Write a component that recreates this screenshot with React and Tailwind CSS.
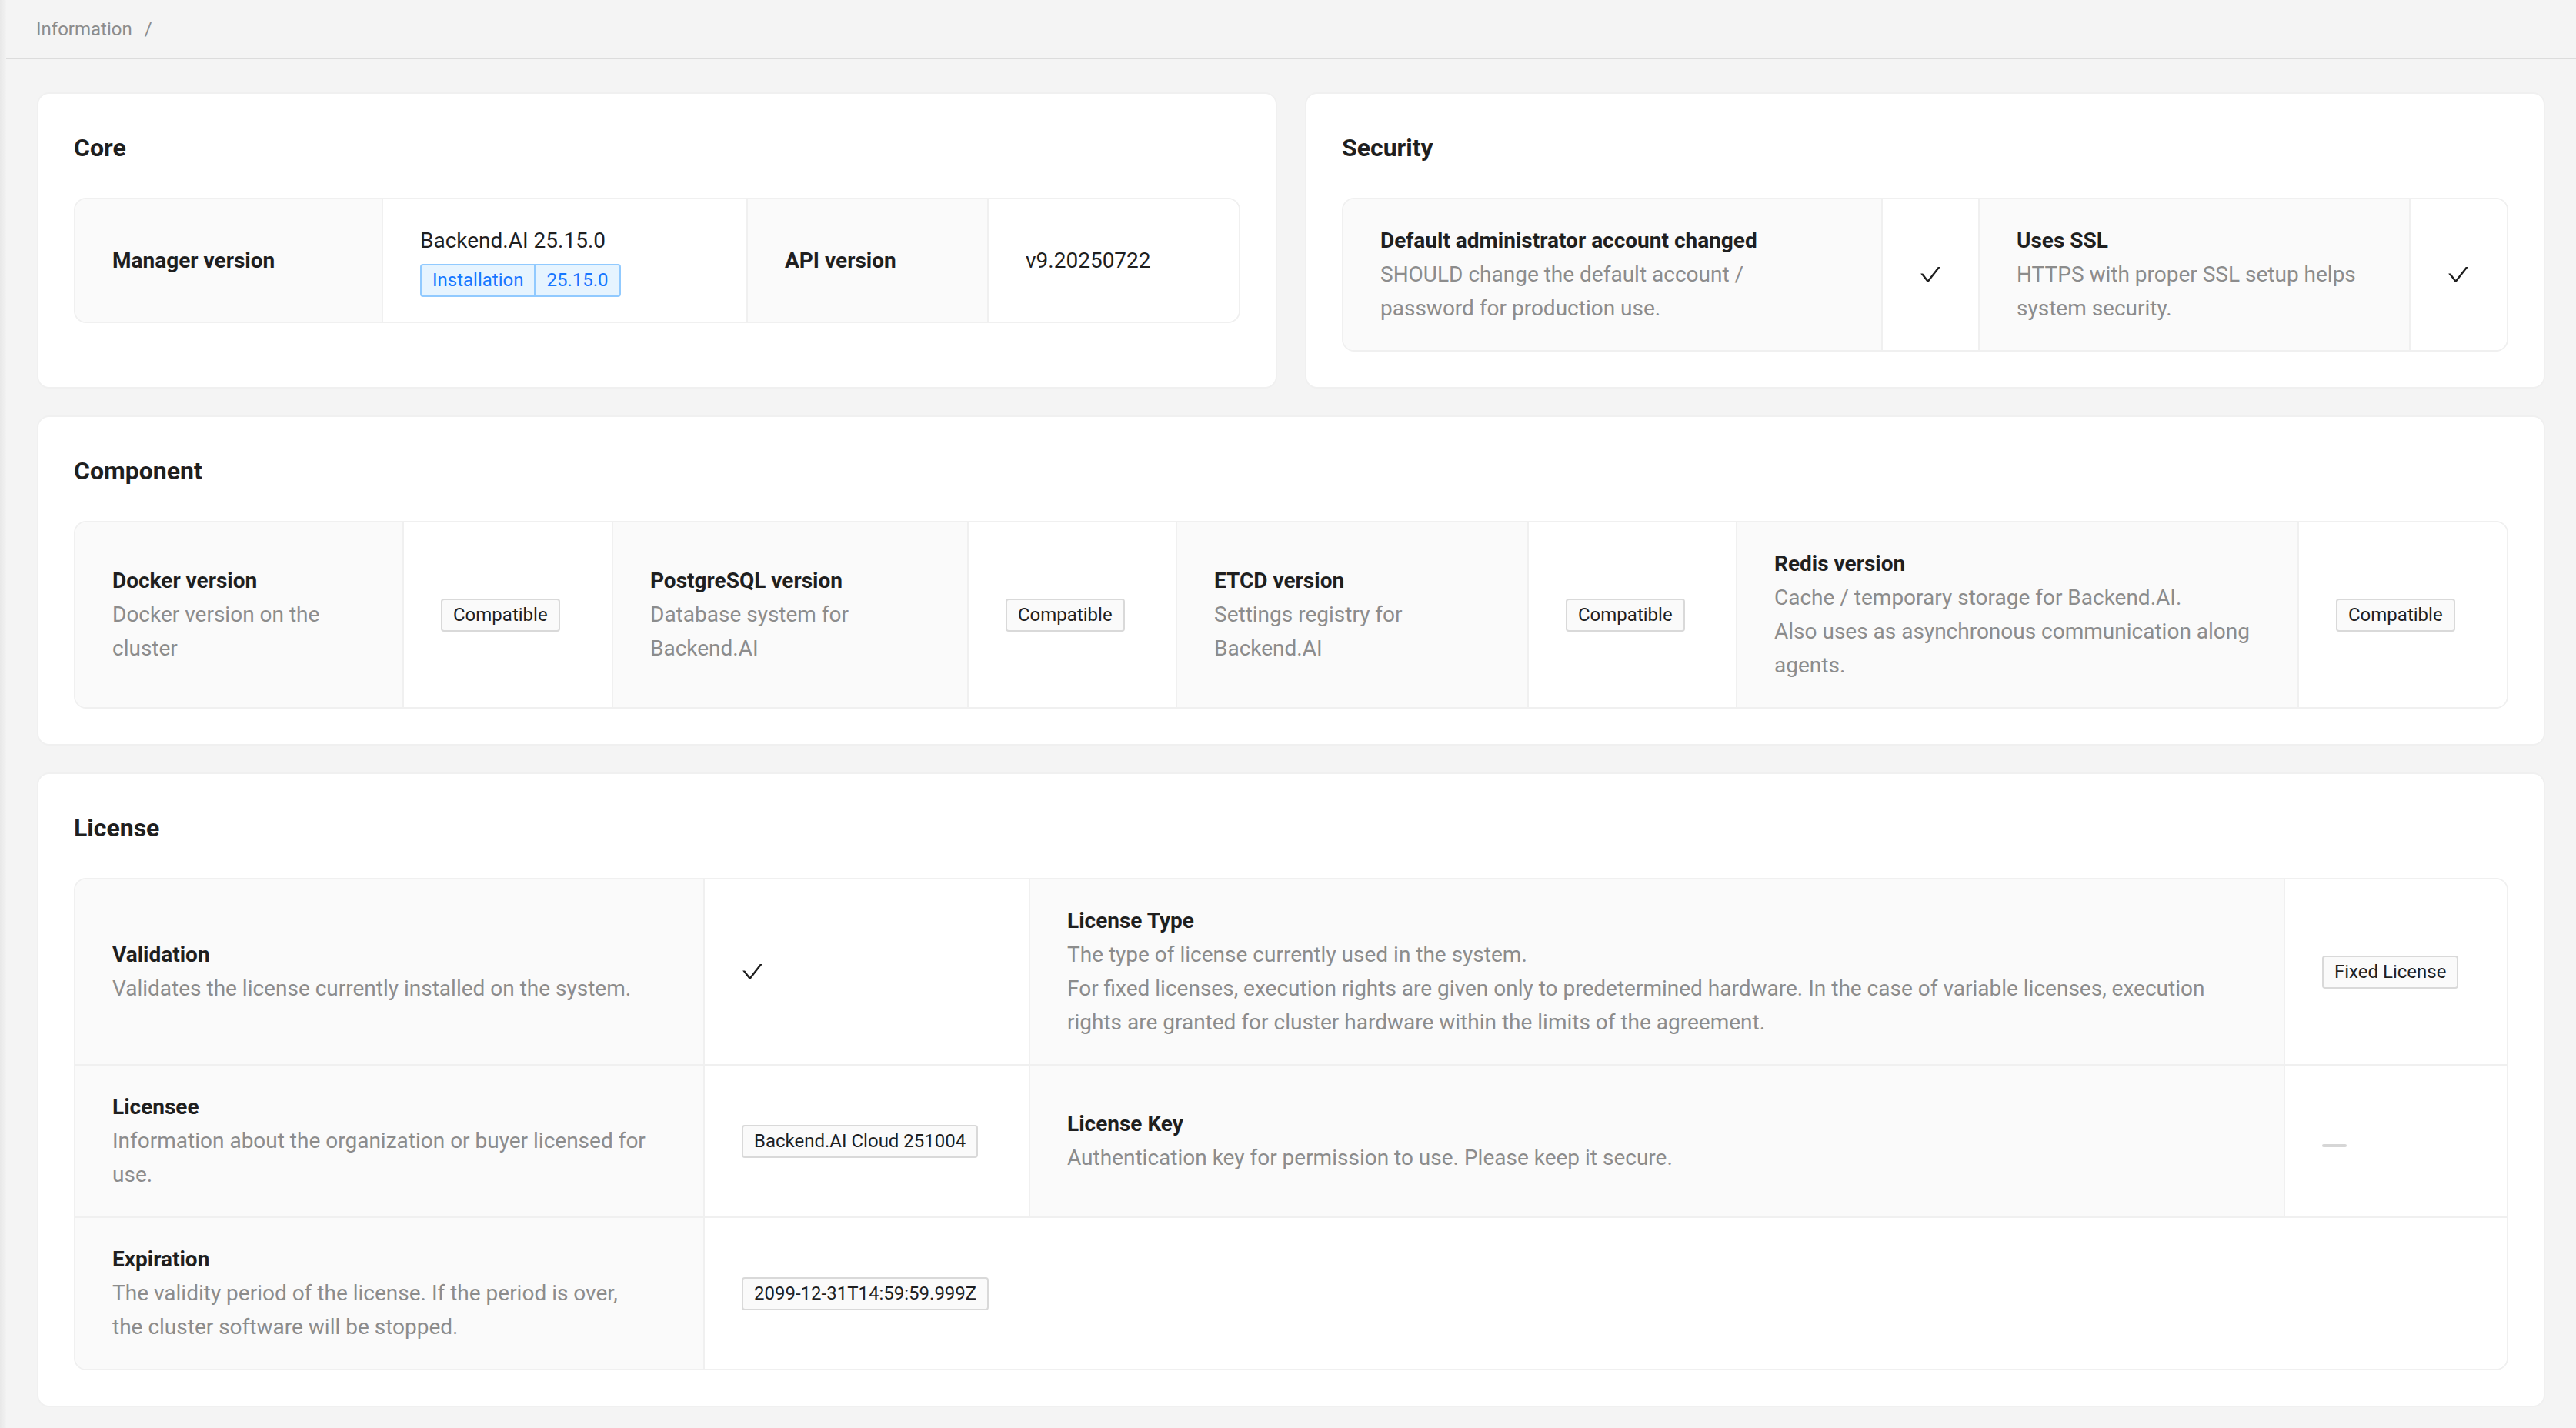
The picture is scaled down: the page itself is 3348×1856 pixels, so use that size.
import React from "react";

const CheckIcon = () => (
  <svg viewBox="64 64 896 896" className="h-[28px] w-[28px] text-[#1f1f1f]" fill="currentColor">
    <path d="M912 190h-69.9c-9.8 0-19.1 4.5-25.1 12.2L404.7 724.5 207 474a32 32 0 00-25.1-12.2H112c-6.7 0-10.4 7.7-6.3 12.9l273.9 347c12.8 16.2 37.4 16.2 50.3 0l488.4-618.9c4.1-5.1.4-12.8-6.3-12.8z" />
  </svg>
);

const Tag = ({ children }) => (
  <span className="inline-flex h-[43px] items-center rounded-[4px] border-2 border-[#d9d9d9] bg-[#fafafa] px-[14px] text-[24px] leading-[39px] text-[#1f1f1f] whitespace-nowrap">
    {children}
  </span>
);

// label cell: bold title + grey description lines
const Label = ({ title, lines = [], className = "" }) => (
  <div className={`flex flex-col justify-center bg-[#fafafa] px-12 py-8 border-[#f0f0f0] ${className}`}>
    <div className="font-bold text-[#1f1f1f]">{title}</div>
    {lines.map((l, i) => (
      <div key={i} className="whitespace-nowrap text-[#8c8c8c]">
        {l}
      </div>
    ))}
  </div>
);

const Value = ({ children, className = "" }) => (
  <div className={`flex flex-col items-start justify-center bg-white px-12 py-8 border-[#f0f0f0] ${className}`}>
    {children}
  </div>
);

const Card = ({ title, children }) => (
  <div className="rounded-[16px] border-2 border-[#f0f0f0] bg-white p-[46px]">
    <h2 className="mb-[41px] text-[32px] font-bold leading-[48px] text-[#1f1f1f]">{title}</h2>
    {children}
  </div>
);

const App = () => {
  return (
    <div className="flex min-h-screen bg-[#f4f4f4] font-['Roboto',sans-serif] text-[28px] leading-[44px] text-[#1f1f1f]">
      <div className="w-2 shrink-0 bg-linear-to-r from-[#e8e8e8] to-[#f2f2f2]" />

      <div className="flex-1">
        {/* Breadcrumb header */}
        <div className="flex h-[77px] items-center border-b-2 border-[#dcdcdc] pl-[39px] text-[24px] text-[#8c8c8c]">
          <span>Information</span>
          <span className="ml-[16px]">/</span>
        </div>

        <div className="flex flex-col gap-[35px] px-10 pt-[43px] pb-7">
          <div className="grid grid-cols-2 gap-[36px]">
            {/* Core */}
            <Card title="Core">
              <div className="grid grid-cols-[400px_474px_313px_1fr] overflow-hidden rounded-[16px] border-2 border-[#f0f0f0]">
                <Label title="Manager version" className="border-r-2" />
                <Value className="border-r-2">
                  <div>Backend.AI 25.15.0</div>
                  <div className="mt-2 flex h-[43px] rounded-[4px] border-2 border-[#91caff] bg-[#e6f4ff] text-[24px] leading-[39px] text-[#1677ff]">
                    <span className="border-r-2 border-[#91caff] px-[14px]">Installation</span>
                    <span className="px-[14px]">25.15.0</span>
                  </div>
                </Value>
                <Label title="API version" className="border-r-2" />
                <Value>
                  <div>v9.20250722</div>
                </Value>
              </div>
            </Card>

            {/* Security */}
            <Card title="Security">
              <div className="grid grid-cols-[701px_126px_560px_1fr] overflow-hidden rounded-[16px] border-2 border-[#f0f0f0]">
                <Label
                  title="Default administrator account changed"
                  lines={["SHOULD change the default account /", "password for production use."]}
                  className="border-r-2"
                />
                <Value className="border-r-2">
                  <CheckIcon />
                </Value>
                <Label
                  title="Uses SSL"
                  lines={["HTTPS with proper SSL setup helps", "system security."]}
                  className="border-r-2"
                />
                <Value>
                  <CheckIcon />
                </Value>
              </div>
            </Card>
          </div>

          {/* Component */}
          <Card title="Component">
            <div className="grid grid-cols-[427px_272px_462px_271px_457px_271px_730px_1fr] overflow-hidden rounded-[16px] border-2 border-[#f0f0f0]">
              <Label title="Docker version" lines={["Docker version on the", "cluster"]} className="border-r-2" />
              <Value className="border-r-2">
                <Tag>Compatible</Tag>
              </Value>
              <Label title="PostgreSQL version" lines={["Database system for", "Backend.AI"]} className="border-r-2" />
              <Value className="border-r-2">
                <Tag>Compatible</Tag>
              </Value>
              <Label title="ETCD version" lines={["Settings registry for", "Backend.AI"]} className="border-r-2" />
              <Value className="border-r-2">
                <Tag>Compatible</Tag>
              </Value>
              <Label
                title="Redis version"
                lines={[
                  "Cache / temporary storage for Backend.AI.",
                  "Also uses as asynchronous communication along",
                  "agents.",
                ]}
                className="border-r-2"
              />
              <Value>
                <Tag>Compatible</Tag>
              </Value>
            </div>
          </Card>

          {/* License */}
          <Card title="License">
            <div className="grid grid-cols-[818px_423px_1631px_1fr] overflow-hidden rounded-[16px] border-2 border-[#f0f0f0]">
              <Label
                title="Validation"
                lines={["Validates the license currently installed on the system."]}
                className="border-r-2 border-b-2"
              />
              <Value className="border-r-2 border-b-2">
                <CheckIcon />
              </Value>
              <Label
                title="License Type"
                lines={[
                  "The type of license currently used in the system.",
                  "For fixed licenses, execution rights are given only to predetermined hardware. In the case of variable licenses, execution",
                  "rights are granted for cluster hardware within the limits of the agreement.",
                ]}
                className="border-r-2 border-b-2"
              />
              <Value className="border-b-2">
                <Tag>Fixed License</Tag>
              </Value>

              <Label
                title="Licensee"
                lines={["Information about the organization or buyer licensed for", "use."]}
                className="border-r-2 border-b-2"
              />
              <Value className="border-r-2 border-b-2">
                <Tag>Backend.AI Cloud 251004</Tag>
              </Value>
              <Label
                title="License Key"
                lines={["Authentication key for permission to use. Please keep it secure."]}
                className="border-r-2 border-b-2"
              />
              <Value className="border-b-2">
                <div className="h-[4px] w-[32px] translate-y-[6px] rounded-full bg-[#d6d6d6]" />
              </Value>

              <Label
                title="Expiration"
                lines={["The validity period of the license. If the period is over,", "the cluster software will be stopped."]}
                className="border-r-2"
              />
              <Value className="col-span-3">
                <Tag>2099-12-31T14:59:59.999Z</Tag>
              </Value>
            </div>
          </Card>
        </div>
      </div>
    </div>
  );
};

export default App;
